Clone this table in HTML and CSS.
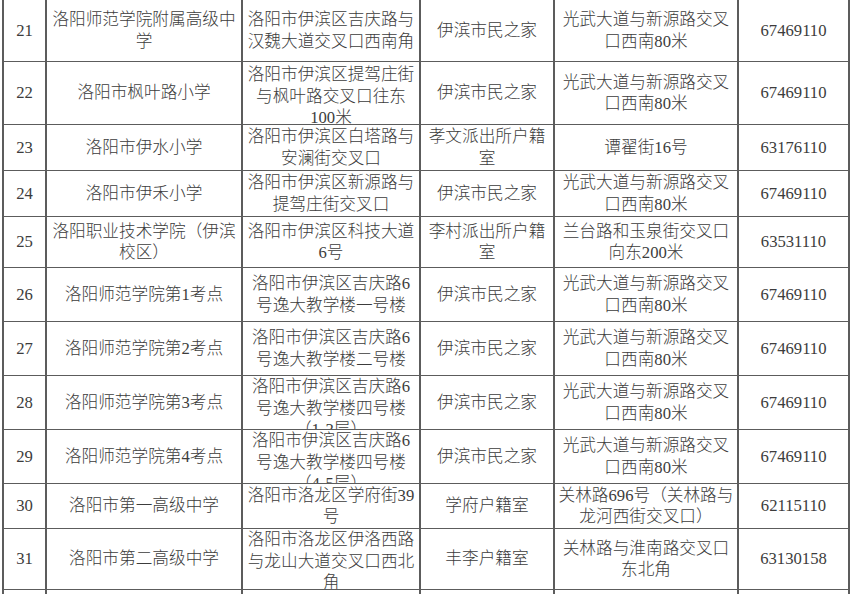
FILE: index.html
```html
<!DOCTYPE html>
<html lang="zh-CN">
<head>
<meta charset="utf-8">
<title>户籍办理点</title>
<link rel="stylesheet" href="styles.css">
</head>
<body>
<div class="sheet">
  <div class="row">
    <div class="c"><div class="t">21</div></div>
    <div class="c"><div class="t">洛阳师范学院附属高级中<br>学</div></div>
    <div class="c"><div class="t">洛阳市伊滨区吉庆路与<br>汉魏大道交叉口西南角</div></div>
    <div class="c"><div class="t">伊滨市民之家</div></div>
    <div class="c"><div class="t">光武大道与新源路交叉<br>口西南80米</div></div>
    <div class="c"><div class="t">67469110</div></div>
  </div>
  <div class="row">
    <div class="c"><div class="t">22</div></div>
    <div class="c"><div class="t">洛阳市枫叶路小学</div></div>
    <div class="c top"><div class="t">洛阳市伊滨区提驾庄街<br>与枫叶路交叉口往东<br>100米</div></div>
    <div class="c"><div class="t">伊滨市民之家</div></div>
    <div class="c"><div class="t">光武大道与新源路交叉<br>口西南80米</div></div>
    <div class="c"><div class="t">67469110</div></div>
  </div>
  <div class="row">
    <div class="c"><div class="t">23</div></div>
    <div class="c"><div class="t">洛阳市伊水小学</div></div>
    <div class="c"><div class="t">洛阳市伊滨区白塔路与<br>安澜街交叉口</div></div>
    <div class="c"><div class="t">孝文派出所户籍<br>室</div></div>
    <div class="c"><div class="t">谭翟街16号</div></div>
    <div class="c"><div class="t">63176110</div></div>
  </div>
  <div class="row">
    <div class="c"><div class="t">24</div></div>
    <div class="c"><div class="t">洛阳市伊禾小学</div></div>
    <div class="c"><div class="t">洛阳市伊滨区新源路与<br>提驾庄街交叉口</div></div>
    <div class="c"><div class="t">伊滨市民之家</div></div>
    <div class="c"><div class="t">光武大道与新源路交叉<br>口西南80米</div></div>
    <div class="c"><div class="t">67469110</div></div>
  </div>
  <div class="row">
    <div class="c"><div class="t">25</div></div>
    <div class="c"><div class="t">洛阳职业技术学院（伊滨<br>校区）</div></div>
    <div class="c"><div class="t">洛阳市伊滨区科技大道<br>6号</div></div>
    <div class="c"><div class="t">李村派出所户籍<br>室</div></div>
    <div class="c"><div class="t">兰台路和玉泉街交叉口<br>向东200米</div></div>
    <div class="c"><div class="t">63531110</div></div>
  </div>
  <div class="row">
    <div class="c"><div class="t">26</div></div>
    <div class="c"><div class="t">洛阳师范学院第1考点</div></div>
    <div class="c"><div class="t">洛阳市伊滨区吉庆路6<br>号逸大教学楼一号楼</div></div>
    <div class="c"><div class="t">伊滨市民之家</div></div>
    <div class="c"><div class="t">光武大道与新源路交叉<br>口西南80米</div></div>
    <div class="c"><div class="t">67469110</div></div>
  </div>
  <div class="row">
    <div class="c"><div class="t">27</div></div>
    <div class="c"><div class="t">洛阳师范学院第2考点</div></div>
    <div class="c"><div class="t">洛阳市伊滨区吉庆路6<br>号逸大教学楼二号楼</div></div>
    <div class="c"><div class="t">伊滨市民之家</div></div>
    <div class="c"><div class="t">光武大道与新源路交叉<br>口西南80米</div></div>
    <div class="c"><div class="t">67469110</div></div>
  </div>
  <div class="row">
    <div class="c"><div class="t">28</div></div>
    <div class="c"><div class="t">洛阳师范学院第3考点</div></div>
    <div class="c"><div class="t">洛阳市伊滨区吉庆路6<br>号逸大教学楼四号楼<br>（1-3层）</div></div>
    <div class="c"><div class="t">伊滨市民之家</div></div>
    <div class="c"><div class="t">光武大道与新源路交叉<br>口西南80米</div></div>
    <div class="c"><div class="t">67469110</div></div>
  </div>
  <div class="row">
    <div class="c"><div class="t">29</div></div>
    <div class="c"><div class="t">洛阳师范学院第4考点</div></div>
    <div class="c"><div class="t">洛阳市伊滨区吉庆路6<br>号逸大教学楼四号楼<br>（4-5层）</div></div>
    <div class="c"><div class="t">伊滨市民之家</div></div>
    <div class="c"><div class="t">光武大道与新源路交叉<br>口西南80米</div></div>
    <div class="c"><div class="t">67469110</div></div>
  </div>
  <div class="row">
    <div class="c"><div class="t">30</div></div>
    <div class="c"><div class="t">洛阳市第一高级中学</div></div>
    <div class="c"><div class="t">洛阳市洛龙区学府街39<br>号</div></div>
    <div class="c"><div class="t">学府户籍室</div></div>
    <div class="c"><div class="t">关林路696号（关林路与<br>龙河西街交叉口）</div></div>
    <div class="c"><div class="t">62115110</div></div>
  </div>
  <div class="row">
    <div class="c"><div class="t">31</div></div>
    <div class="c"><div class="t">洛阳市第二高级中学</div></div>
    <div class="c"><div class="t">洛阳市洛龙区伊洛西路<br>与龙山大道交叉口西北<br>角</div></div>
    <div class="c"><div class="t">丰李户籍室</div></div>
    <div class="c"><div class="t">关林路与淮南路交叉口<br>东北角</div></div>
    <div class="c"><div class="t">63130158</div></div>
  </div>
  <div class="row">
    <div class="c"></div>
    <div class="c"></div>
    <div class="c"></div>
    <div class="c"></div>
    <div class="c"></div>
    <div class="c"></div>
  </div>
</div>
</body>
</html>
```

FILE: styles.css
```css
html, body {
  margin: 0;
  padding: 0;
  background: #ffffff;
}

body {
  width: 852px;
  height: 594px;
  overflow: hidden;
  font-family: "Liberation Serif", "Noto Sans CJK SC", serif;
  font-size: 16.67px;
  font-weight: 300;
  color: #3c3c3c;
}

.sheet {
  margin-left: 2px;
  width: 848px;
  box-sizing: border-box;
  padding: 0 2px;
  background: #5c5c5c;
  display: grid;
  grid-template-columns: 41px 194px 176px 132px 182px 109px;
  grid-template-rows: 61px 62px 45px 45px 50px 53px 53px 53px 53px 44px 60px 4px;
  column-gap: 2px;
  row-gap: 1px;
}

.row {
  display: contents;
}

.c {
  background: #ffffff;
  overflow: hidden;
  display: flex;
  flex-direction: column;
  justify-content: safe center;
  align-items: center;
  min-width: 0;
  min-height: 0;
}

.c.top {
  padding-top: 2px;
}

.t {
  line-height: 21.5px;
  text-align: center;
  white-space: nowrap;
}
```
